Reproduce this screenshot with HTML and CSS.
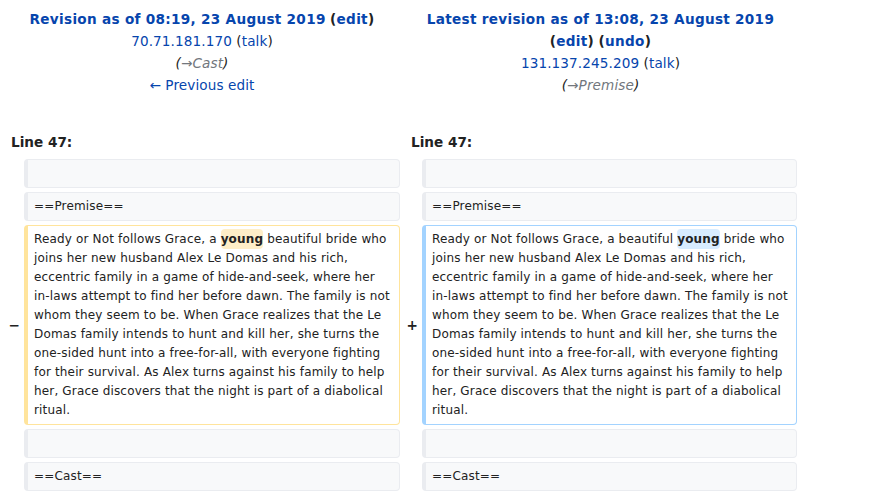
FILE: index.html
```html
<!DOCTYPE html>
<html lang="en">
<head>
<meta charset="utf-8">
<title>Ready or Not: Difference between revisions</title>
<link rel="stylesheet" href="styles.css">
</head>
<body>
<div class="diff">
  <div class="title otitle">
    <div><a class="strong" href="#">Revision as of 08:19, 23 August 2019</a> <span class="strong">(<a href="#">edit</a>)</span></div>
    <div><a href="#">70.71.181.170</a> <span class="tool">(<a href="#">talk</a>)</span></div>
    <div class="comment">(<span class="auto">→Cast</span>)</div>
    <div><a href="#">← Previous edit</a></div>
  </div>
  <div class="title ntitle">
    <div><a class="strong" href="#">Latest revision as of 13:08, 23 August 2019</a> <span class="strong">(<a href="#">edit</a>)</span> <span class="strong">(<a href="#">undo</a>)</span></div>
    <div><a href="#">131.137.245.209</a> <span class="tool">(<a href="#">talk</a>)</span></div>
    <div class="comment">(<span class="auto">→Premise</span>)</div>
  </div>

  <div class="lineno">Line 47:</div>
  <div class="lineno">Line 47:</div>

  <div class="marker"></div>
  <div class="line ctx">&nbsp;</div>
  <div class="marker"></div>
  <div class="line ctx">&nbsp;</div>

  <div class="marker"></div>
  <div class="line ctx">==Premise==</div>
  <div class="marker"></div>
  <div class="line ctx">==Premise==</div>

  <div class="marker">−</div>
  <div class="line del">Ready or Not follows Grace, a <del class="chg">young</del> beautiful bride who joins her new husband Alex Le Domas and his rich, eccentric family in a game of hide-and-seek, where her in-laws attempt to find her before dawn. The family is not whom they seem to be. When Grace realizes that the Le Domas family intends to hunt and kill her, she turns the one-sided hunt into a free-for-all, with everyone fighting for their survival. As Alex turns against his family to help her, Grace discovers that the night is part of a diabolical ritual.</div>
  <div class="marker">+</div>
  <div class="line add">Ready or Not follows Grace, a beautiful <ins class="chg">young</ins> bride who joins her new husband Alex Le Domas and his rich, eccentric family in a game of hide-and-seek, where her in-laws attempt to find her before dawn. The family is not whom they seem to be. When Grace realizes that the Le Domas family intends to hunt and kill her, she turns the one-sided hunt into a free-for-all, with everyone fighting for their survival. As Alex turns against his family to help her, Grace discovers that the night is part of a diabolical ritual.</div>

  <div class="marker"></div>
  <div class="line ctx">&nbsp;</div>
  <div class="marker"></div>
  <div class="line ctx">&nbsp;</div>

  <div class="marker"></div>
  <div class="line ctx">==Cast==</div>
  <div class="marker"></div>
  <div class="line ctx">==Cast==</div>
</div>
</body>
</html>
```
FILE: styles.css
```css
html, body {
  margin: 0;
  padding: 0;
  background: #ffffff;
}
body {
  font-family: "DejaVu Sans", sans-serif;
  font-size: 13.6px;
  line-height: 22px;
  color: #222222;
}
a {
  color: #0645ad;
  text-decoration: none;
}
.diff {
  display: grid;
  grid-template-columns: 16px 376px 14px 375px;
  column-gap: 4px;
  row-gap: 4px;
  padding: 8px 4px 4px 4px;
}
.title {
  grid-column: span 2;
  text-align: center;
  align-self: start;
  padding: 0 6px;
  letter-spacing: 0.1px;
}
.strong {
  font-weight: bold;
  letter-spacing: 0.3px;
}
.comment {
  font-style: italic;
}
.auto {
  color: #72777d;
}
.lineno {
  grid-column: span 2;
  font-weight: bold;
  padding: 31px 0 2px 7px;
}
.marker {
  text-align: right;
  font-weight: bold;
  align-self: center;
}
.line {
  font-size: 12px;
  line-height: 19px;
  letter-spacing: 0.16px;
  padding: 4px 6px;
  border-style: solid;
  border-width: 1px 1px 1px 4px;
  border-radius: 4px;
}
.ctx {
  background: #f8f9fa;
  border-color: #eaecf0;
  color: #222222;
}
.del {
  border-color: #ffe49c;
}
.add {
  border-color: #a3d3ff;
}
.chg {
  font-weight: bold;
  text-decoration: none;
  padding: 3px 0;
  border-radius: 4px;
}
del.chg {
  background: #feeec8;
}
ins.chg {
  background: #d8ecff;
}
```
